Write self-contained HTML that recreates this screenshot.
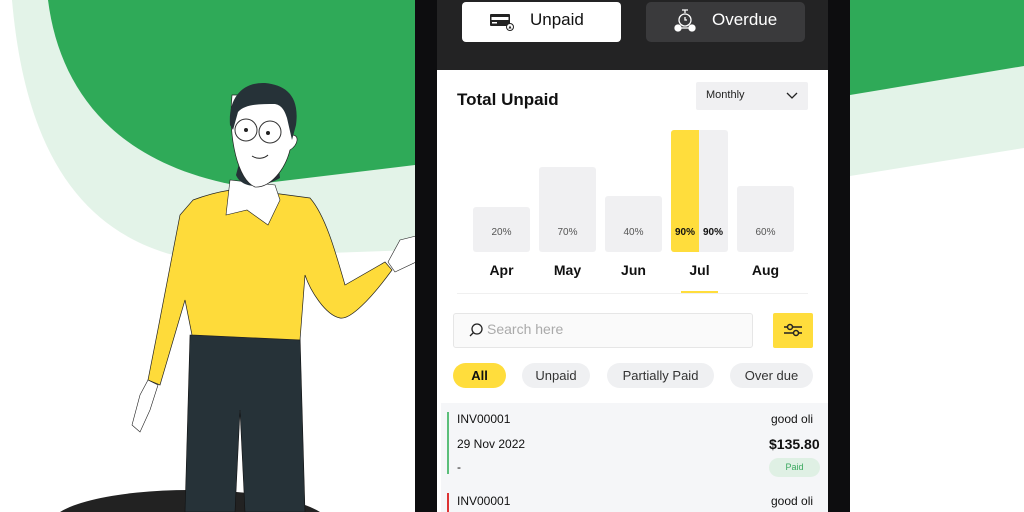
<!DOCTYPE html>
<html><head><style>
*{margin:0;padding:0;box-sizing:border-box}
html,body{width:1024px;height:512px;overflow:hidden}
body{background:#fff;position:relative;font-family:"Liberation Sans",sans-serif;color:#111}
.a{position:absolute}
.chip{position:absolute;top:363px;height:25px;border-radius:13px;background:#eff0f2;font-size:13px;color:#333;text-align:center;line-height:25px}
.bar{position:absolute;background:#f0f0f2;border-radius:3px;top:auto;width:57px}
.pct{position:absolute;top:227px;font-size:10px;color:#555;width:57px;text-align:center}
.mon{position:absolute;top:262px;font-size:14px;font-weight:bold;color:#111;width:57px;text-align:center}
</style></head><body>
<svg class="a" style="left:0;top:0" width="1024" height="512">
<path d="M12,0 C25,150 80,235 185,258 L415,250 L415,0Z" fill="#e3f3e8"/>
<path d="M48,0 C60,95 120,165 240,186 L415,165 L415,0Z" fill="#2faa58"/>
<path d="M850,0 L1024,0 L1024,148 L850,176Z" fill="#e3f3e8"/>
<path d="M850,0 L1024,0 L1024,66 L850,95Z" fill="#2faa58"/>
<ellipse cx="190" cy="525" rx="140" ry="35" fill="#222"/>
<path d="M190,335 L185,512 L235,512 L240,410 L245,512 L305,512 L300,335Z" fill="#263238" stroke="#111" stroke-width=".6"/>
<path d="M193,200 C220,190 240,188 250,190 L310,198 C325,215 335,250 345,285 L385,262 L392,270 C370,300 350,320 340,318 C325,315 310,290 305,275 L300,340 L192,335 L185,300 L160,385 L148,380 C160,320 175,240 180,215Z" fill="#fedb3a" stroke="#222" stroke-width=".7"/>
<path d="M148,380 L140,395 L132,425 L140,432 L150,410 L158,385Z" fill="#fff" stroke="#222" stroke-width=".6"/>
<path d="M388,262 L400,240 L416,236 L416,262 L395,272Z" fill="#fff" stroke="#222" stroke-width=".6"/>
<path d="M230,180 L226,215 L247,210 L268,225 L280,200 L275,185Z" fill="#fff" stroke="#222" stroke-width=".6"/>
<path d="M236,175 C240,185 255,192 280,178 L278,160 L240,160Z" fill="#263238"/>
<path d="M232,95 C228,140 238,180 255,187 C270,188 285,170 290,150 C298,145 300,135 292,135 L290,95 Z" fill="#fff" stroke="#222" stroke-width=".7"/>
<path d="M230,125 C228,95 245,82 265,83 C285,85 300,95 296,125 L292,140 L287,118 C284,108 280,105 275,104 C260,104 245,104 238,112 L233,130Z" fill="#263238"/>
<circle cx="246" cy="130" r="11" fill="none" stroke="#333" stroke-width="1"/>
<circle cx="270" cy="132" r="11" fill="none" stroke="#333" stroke-width="1"/>
<circle cx="246" cy="130" r="2" fill="#222"/><circle cx="268" cy="133" r="2" fill="#222"/>
<path d="M252,156 C258,160 265,158 268,155" fill="none" stroke="#222" stroke-width="1"/>
<rect x="415" y="-30" width="435" height="580" rx="30" fill="#0d0d0f"/>
<rect x="437" y="0" width="391" height="70" fill="#232324"/>
<rect x="437" y="70" width="391" height="442" fill="#fff"/>
<rect x="441" y="403" width="387" height="109" fill="#f5f6f8"/>
</svg>
<div class="a" style="left:462px;top:2px;width:159px;height:40px;background:#fff;border-radius:4px"></div>
<svg class="a" style="left:490px;top:13px" width="24" height="18"><rect x="0" y="1" width="20" height="12" rx="1" fill="#222"/><rect x="1.5" y="4" width="17" height="3" fill="#fff"/><rect x="2" y="9" width="5" height="1.5" fill="#fff"/><circle cx="20" cy="14" r="3.5" fill="#fff" stroke="#222"/><path d="M18.5,15.5 L20,12.5 L21.5,15.5Z" fill="#222"/></svg>
<div class="a" style="left:530px;top:10px;font-size:17px;color:#111">Unpaid</div>
<div class="a" style="left:646px;top:2px;width:159px;height:40px;background:#3a3a3c;border-radius:5px"></div>
<svg class="a" style="left:673px;top:8px" width="24" height="26" fill="none" stroke="#fff" stroke-width="1.3"><path d="M9,2 h6 M12,2 v3"/><circle cx="12" cy="12" r="6"/><path d="M12,9 v3 h2"/><circle cx="5" cy="20" r="3" fill="#fff"/><circle cx="19" cy="20" r="3" fill="#fff"/><path d="M8,20 h8"/></svg>
<div class="a" style="left:712px;top:10px;font-size:17px;color:#fff">Overdue</div>
<div class="a" style="left:457px;top:90px;font-size:17px;font-weight:bold;color:#111">Total Unpaid</div>
<div class="a" style="left:696px;top:82px;width:112px;height:28px;background:#f0f0f2;border-radius:2px;font-size:11px;color:#222;padding:7px 0 0 10px">Monthly</div>
<svg class="a" style="left:786px;top:92px" width="12" height="8"><path d="M1,1 L6,6 L11,1" fill="none" stroke="#222" stroke-width="1.3"/></svg>
<div class="bar" style="left:473px;top:207px;height:45px"></div>
<div class="bar" style="left:539px;top:167px;height:85px"></div>
<div class="bar" style="left:605px;top:196px;height:56px"></div>
<div class="bar" style="left:671px;top:130px;height:122px"></div>
<div class="a" style="left:671px;top:130px;width:28px;height:122px;background:#ffdd3c;border-radius:3px 0 0 3px"></div>
<div class="bar" style="left:737px;top:186px;height:66px"></div>
<div class="pct" style="left:473px">20%</div><div class="pct" style="left:539px">70%</div><div class="pct" style="left:605px">40%</div>
<div class="a" style="left:675px;top:227px;font-size:10px;font-weight:bold">90%</div><div class="a" style="left:703px;top:227px;font-size:10px;font-weight:bold">90%</div>
<div class="pct" style="left:737px">60%</div>
<div class="mon" style="left:473px">Apr</div><div class="mon" style="left:539px">May</div><div class="mon" style="left:605px">Jun</div><div class="mon" style="left:671px">Jul</div><div class="mon" style="left:737px">Aug</div>
<div class="a" style="left:457px;top:293px;width:351px;height:1px;background:#f0f0f0"></div>
<div class="a" style="left:681px;top:291px;width:37px;height:2px;background:#ffdd3c"></div>
<div class="a" style="left:453px;top:313px;width:300px;height:35px;border:1px solid #e6e6e6;background:#fafafa;border-radius:3px"></div>
<svg class="a" style="left:468px;top:322px" width="16" height="16" fill="none" stroke="#222" stroke-width="1.3"><circle cx="9" cy="7" r="5"/><path d="M5.5,10.5 L2,14"/></svg>
<div class="a" style="left:487px;top:321px;font-size:14px;color:#aaa">Search here</div>
<div class="a" style="left:773px;top:313px;width:40px;height:35px;background:#ffdd3c;border-radius:2px"></div>
<svg class="a" style="left:782px;top:321px" width="22" height="18" fill="none" stroke="#222" stroke-width="1.5"><path d="M2,6 h18 M2,12 h18"/><circle cx="8" cy="6" r="2.5" fill="#ffdd3c"/><circle cx="14" cy="12" r="2.5" fill="#ffdd3c"/></svg>
<div class="chip" style="left:453px;width:53px;background:#ffdd3c;font-weight:bold;color:#111">All</div>
<div class="chip" style="left:522px;width:68px">Unpaid</div>
<div class="chip" style="left:607px;width:107px">Partially Paid</div>
<div class="chip" style="left:730px;width:83px">Over due</div>
<div class="a" style="left:447px;top:412px;width:1.5px;height:62px;background:#5cbf7a"></div>
<div class="a" style="left:457px;top:412px;font-size:12px">INV00001</div>
<div class="a" style="left:457px;top:437px;font-size:12px">29 Nov 2022</div>
<div class="a" style="left:457px;top:460px;font-size:12px">-</div>
<div class="a" style="left:771px;top:412px;font-size:12px">good oli</div>
<div class="a" style="left:769px;top:436px;font-size:14px;font-weight:bold">$135.80</div>
<div class="a" style="left:769px;top:458px;width:51px;height:19px;border-radius:10px;background:#dff0e4;color:#3aa85e;font-size:9px;text-align:center;line-height:19px">Paid</div>
<div class="a" style="left:447px;top:493px;width:1.5px;height:19px;background:#d33"></div>
<div class="a" style="left:457px;top:494px;font-size:12px;line-height:14px">INV00001</div>
<div class="a" style="left:771px;top:494px;font-size:12px;line-height:14px">good oli</div>
</body></html>
